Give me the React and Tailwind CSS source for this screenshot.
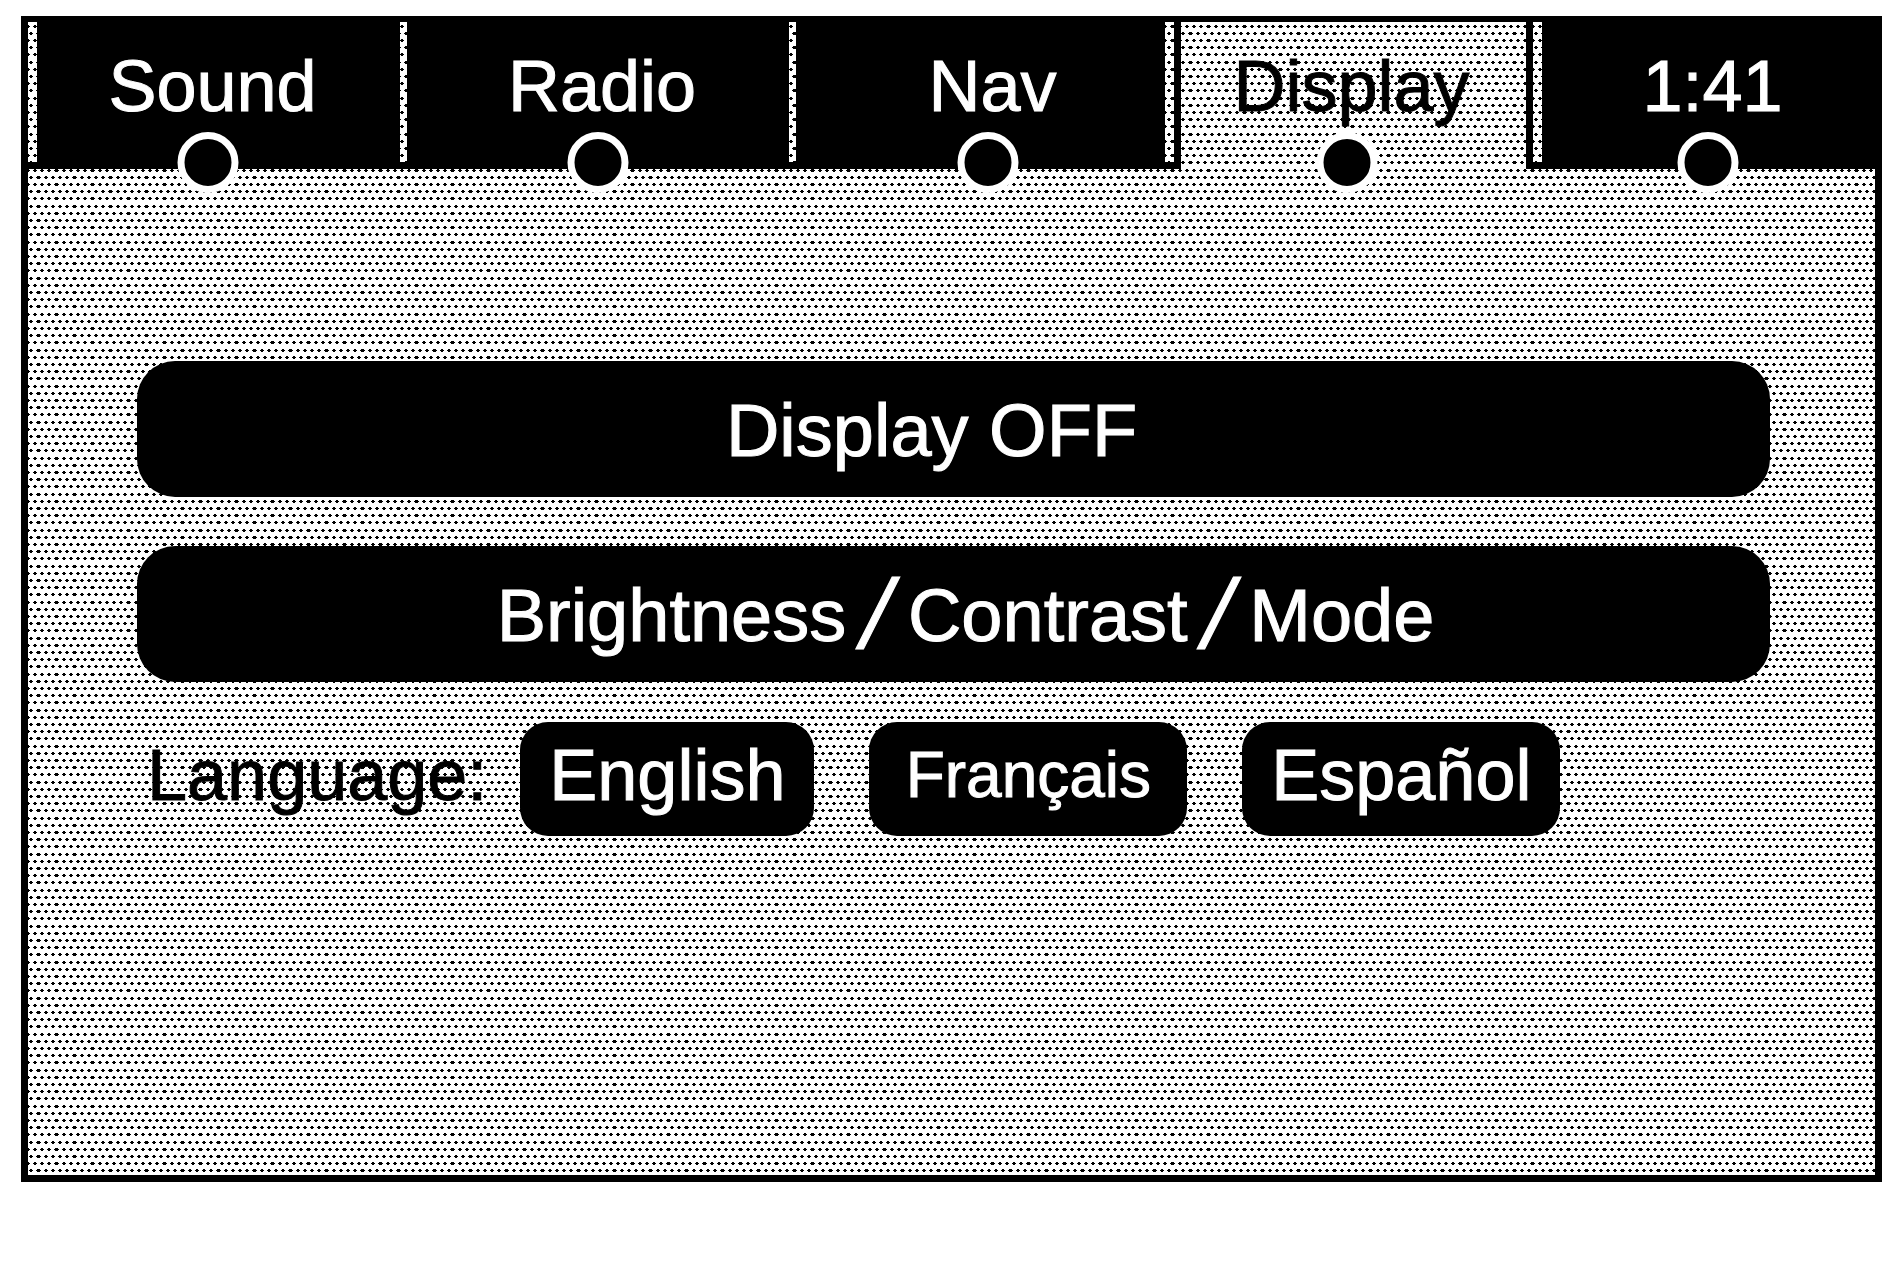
import clsx from 'clsx'

const tabs = [
  { label: 'Sound', slit: 'w-[9px]', face: 'pr-5' },
  { label: 'Radio', slit: 'w-[7px]', face: '' },
  { label: 'Nav', slit: 'w-[7px]', face: 'pl-4', closed: 'right' },
  { label: 'Display', face: 'pr-3', active: true },
  { label: '1:41', slit: 'w-[9px]', face: '', closed: 'left' },
]

const languages = [
  { label: 'English', size: 'w-[294px] text-[72px]' },
  { label: 'Français', size: 'w-[318px] text-[64px]' },
  { label: 'Español', size: 'w-[318px] text-[72px]' },
]

const evenColumns = [0, 7, 14, 21, 28]
const oddColumns = [3, 10, 18, 25, 32]
const dotRows = [0, 7, 14, 21, 28, 36, 43, 50, 57, 64]

// Staggered dot screen, every fifth dot in a row is one pixel wider
function Halftone() {
  return (
    <svg className="absolute inset-0 -z-10 h-full w-full" shapeRendering="crispEdges" aria-hidden="true">
      <pattern id="halftone" x="-2" width="36" height="72" patternUnits="userSpaceOnUse">
        {dotRows.map((y, row) => {
          const odd = row % 2 === 1
          return (odd ? oddColumns : evenColumns).map((x, col) => {
            const extra = col === (odd ? 1 : 4) ? 1 : 0
            return (
              <g key={x + '-' + y}>
                <rect x={x} y={y + 4} width={4 + extra} height="1" />
                <rect x={x + 1} y={y + 3} width={2 + extra} height="3" />
              </g>
            )
          })
        })}
      </pattern>
      <rect width="100%" height="100%" fill="#fff" />
      <rect width="100%" height="100%" fill="url(#halftone)" />
    </svg>
  )
}

function Slit({ width }) {
  return <span className={clsx('shrink-0 border-b-[7px] border-black', width)} />
}

function Tab({ label, slit, face, closed, active }) {
  return (
    <div className={clsx('flex min-w-0', closed === 'left' && 'border-l-[7px] border-black', closed === 'right' && 'border-r-[7px] border-black')}>
      {slit && <Slit width={slit} />}
      <button
        type="button"
        role="tab"
        aria-selected={Boolean(active)}
        className={clsx('flex flex-1 justify-center', face, active ? 'text-black' : 'bg-black text-white')}
      >
        <span className="relative block h-full pt-5 pl-2 leading-[88px]">
          {label}
          <span className="absolute -bottom-6 left-1/2 h-[61px] w-[61px] -translate-x-1/2 rounded-full border-[7px] border-white bg-black" />
        </span>
      </button>
      {closed === 'right' && <Slit width="w-[9px]" />}
    </div>
  )
}

function Slash() {
  return <span className="mx-4 font-['DejaVu_Sans',sans-serif] text-[88px] leading-0 italic">/</span>
}

export default function App() {
  return (
    <main className="min-h-screen bg-white pt-4 pr-[11px] pl-[21px] font-['Liberation_Sans',Arial,sans-serif] text-[72px] leading-none text-black [-webkit-text-stroke:1px_currentColor]">
      <div className="relative isolate border-[7px] border-t-[6px] border-black">
        <Halftone />
        <nav role="tablist" aria-label="Menu" className="grid h-[147px] grid-cols-[372fr_389fr_392fr_345fr_349fr]">
          {tabs.map((tab) => (
            <Tab key={tab.label} {...tab} />
          ))}
        </nav>

        <section className="flex flex-col pt-48 pr-[105px] pb-[339px] pl-[109px]">
          <div className="flex flex-col gap-[49px] text-[74px] text-white">
            <button type="button" className="h-[136px] rounded-[38px] bg-black pt-1 pr-11">
              Display OFF
            </button>
            <button type="button" className="h-[136px] rounded-[38px] bg-black pt-1 pl-6">
              Brightness<Slash />Contrast<Slash />Mode
            </button>
          </div>

          <div role="group" aria-labelledby="language" className="mt-10 flex items-center pl-[10px]">
            <span id="language" className="mr-[33px] pb-2">
              Language:
            </span>
            <div className="flex gap-[55px]">
              {languages.map(({ label, size }) => (
                <button key={label} type="button" className={clsx('h-[114px] rounded-[28px] bg-black pb-2 text-white', size)}>
                  {label}
                </button>
              ))}
            </div>
          </div>
        </section>
      </div>
    </main>
  )
}
